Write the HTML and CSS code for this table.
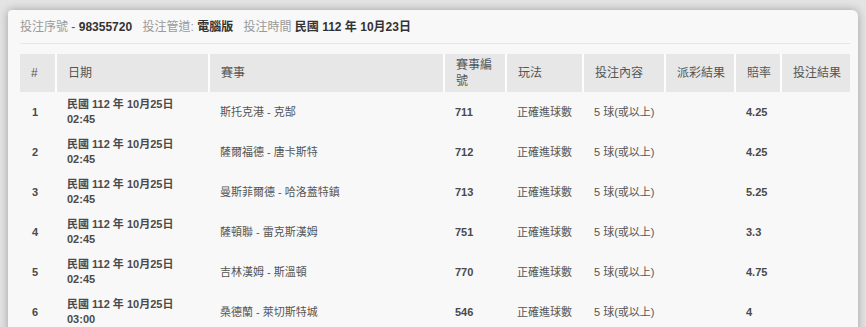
FILE: index.html
```html
<!DOCTYPE html>
<html lang="zh-Hant">
<head>
<meta charset="utf-8">
<title>投注明細</title>
<link rel="stylesheet" href="styles.css">
</head>
<body>
<div class="panel">
  <div class="summary">
    <span class="item"><span class="label">投注序號</span> <span class="dash">-</span> <b class="value">98355720</b></span>
    <span class="item"><span class="label">投注管道:</span> <b class="value">電腦版</b></span>
    <span class="item"><span class="label">投注時間</span> <b class="value">民國 112 年 10月23日</b></span>
  </div>
  <table class="bets">
    <colgroup>
      <col class="c-no"><col class="c-date"><col class="c-match"><col class="c-id"><col class="c-play"><col class="c-pick"><col class="c-pay"><col class="c-odds"><col class="c-res">
    </colgroup>
    <thead>
      <tr><th>#</th><th>日期</th><th>賽事</th><th>賽事編號</th><th>玩法</th><th>投注內容</th><th>派彩結果</th><th>賠率</th><th>投注結果</th></tr>
    </thead>
    <tbody>
      <tr><td class="b">1</td><td class="b">民國 112 年 10月25日<br>02:45</td><td>斯托克港 - 克郜</td><td class="b">711</td><td>正確進球數</td><td>5 球(或以上)</td><td></td><td class="b">4.25</td><td></td></tr>
      <tr><td class="b">2</td><td class="b">民國 112 年 10月25日<br>02:45</td><td>薩爾福德 - 唐卡斯特</td><td class="b">712</td><td>正確進球數</td><td>5 球(或以上)</td><td></td><td class="b">4.25</td><td></td></tr>
      <tr><td class="b">3</td><td class="b">民國 112 年 10月25日<br>02:45</td><td>曼斯菲爾德 - 哈洛蓋特鎮</td><td class="b">713</td><td>正確進球數</td><td>5 球(或以上)</td><td></td><td class="b">5.25</td><td></td></tr>
      <tr><td class="b">4</td><td class="b">民國 112 年 10月25日<br>02:45</td><td>薩頓聯 - 雷克斯漢姆</td><td class="b">751</td><td>正確進球數</td><td>5 球(或以上)</td><td></td><td class="b">3.3</td><td></td></tr>
      <tr><td class="b">5</td><td class="b">民國 112 年 10月25日<br>02:45</td><td>吉林漢姆 - 斯溫頓</td><td class="b">770</td><td>正確進球數</td><td>5 球(或以上)</td><td></td><td class="b">4.75</td><td></td></tr>
      <tr><td class="b">6</td><td class="b">民國 112 年 10月25日<br>03:00</td><td>桑德蘭 - 萊切斯特城</td><td class="b">546</td><td>正確進球數</td><td>5 球(或以上)</td><td></td><td class="b">4</td><td></td></tr>
    </tbody>
  </table>
</div>
</body>
</html>
```
FILE: styles.css
```css
html, body {
  margin: 0;
  padding: 0;
}
body {
  background: #e4e4e4;
  font-family: "Liberation Sans", Arial, "Noto Sans CJK TC", sans-serif;
  color: #555;
  overflow: hidden;
  height: 327px;
}
.panel {
  margin: 10px 0 0 8px;
  width: 830px;
  padding: 9px 8px 20px 12px;
  background: #f8f8f8;
  border-radius: 4px 6px 0 0;
  box-shadow: 0 0 10px rgba(0, 0, 0, 0.3);
}
.summary {
  font-size: 12px;
  line-height: 16px;
  padding-bottom: 8px;
  border-bottom: 1px solid #e6e6e6;
  margin-bottom: 10px;
  color: #333;
}
.item {
  margin-right: 7px;
}
.label {
  color: #9a9a9a;
}
.dash {
  color: #555;
}
.value {
  font-weight: bold;
  color: #333;
}
.bets {
  width: 830px;
  table-layout: fixed;
  border-collapse: separate;
  border-spacing: 0;
}
.c-no { width: 35px; }
.c-date { width: 153px; }
.c-match { width: 235px; }
.c-id { width: 62px; }
.c-play { width: 77px; }
.c-pick { width: 82px; }
.c-pay { width: 70px; }
.c-odds { width: 46px; }
.c-res { width: 70px; }
.bets th {
  background: #e7e7e7;
  font-weight: normal;
  color: #555;
  font-size: 12px;
  line-height: 16px;
  text-align: left;
  padding: 3px 4px 3px 11px;
  height: 32px;
  vertical-align: middle;
  border-left: 2px solid #fdfdfd;
}
.bets th:first-child {
  border-left: 0;
}
.bets td {
  font-size: 11px;
  line-height: 15px;
  padding: 5px 4px 5px 12px;
  vertical-align: middle;
  color: #555;
  white-space: nowrap;
}
.bets td.b {
  font-weight: bold;
  color: #4a4a4a;
}
```
